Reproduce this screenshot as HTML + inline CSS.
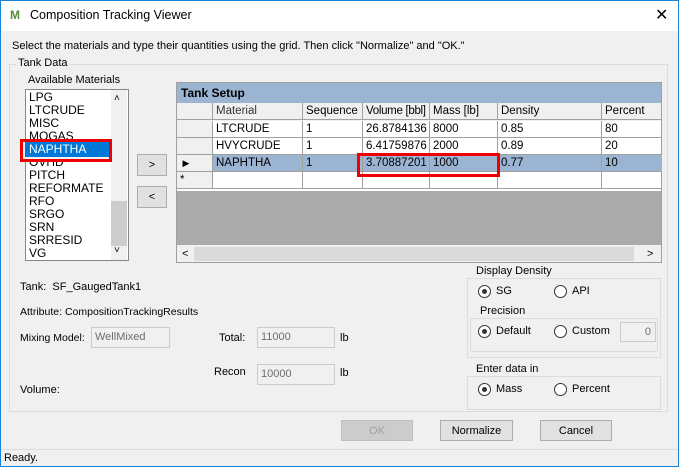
<!DOCTYPE html><html><head><style>
*{margin:0;padding:0;box-sizing:border-box}
body{width:679px;height:467px;overflow:hidden;font-family:"Liberation Sans",sans-serif;font-size:11px;color:#000;background:#f0f0f0;position:relative}
.a{position:absolute;white-space:nowrap}
.win{position:absolute;left:0;top:0;width:679px;height:467px;border:1px solid #1883d7}
.gb{position:absolute;border:1px solid #dcdcdc}
.gl{position:absolute;background:#f0f0f0;padding:0 2px;line-height:13px}
.btn{position:absolute;border:1px solid #adadad;background:#e1e1e1;text-align:center;line-height:20px}
.tb{position:absolute;border:1px solid #ccc;background:#f0f0f0;color:#6d6d6d;line-height:18px;padding-left:3px}
.rad{position:absolute;width:13px;height:13px;border:1px solid #333;border-radius:50%;background:#fff}
.rad.on::after{content:"";position:absolute;left:3px;top:3px;width:5px;height:5px;border-radius:50%;background:#333}
.li{position:absolute;left:31px;line-height:13px;font-size:12px}
.c{position:absolute;line-height:17px;padding-left:3px;border-right:1px solid #a0a0a0;border-bottom:1px solid #a0a0a0;height:17px;overflow:hidden;font-size:11.5px}
</style></head><body>
<div class="a" style="left:0;top:0;width:679px;height:31px;background:#fff"></div>
<div class="a" style="left:10px;top:8px;font-size:12px;color:#5a8a3a;font-weight:bold">M</div>
<div class="a" style="left:30px;top:8px;font-size:12.5px">Composition Tracking Viewer</div>
<div class="a" style="left:655px;top:5px;font-size:16px">✕</div>
<div class="a" style="left:12px;top:40px">Select the materials and type their quantities using the grid. Then click "Normalize" and "OK."</div>
<div class="gb" style="left:9px;top:64px;width:659px;height:348px"></div>
<div class="gl" style="left:16px;top:57px">Tank Data</div>
<div class="a" style="left:28px;top:74px">Available Materials</div>
<div class="a" style="left:25px;top:89px;width:104px;height:172px;background:#fff;border:1px solid #828790;overflow:hidden">
<div class="a" style="left:85px;top:0;width:16px;height:170px;background:#f0f0f0"></div>
<div class="a" style="left:85px;top:111px;width:16px;height:45px;background:#cdcdcd"></div>
<div class="a" style="left:88px;top:3px;font-size:10px">˄</div>
<div class="a" style="left:88px;top:155px;font-size:10px">˅</div>
</div>
<div class="li a" style="left:29px;top:91px">LPG</div>
<div class="li a" style="left:29px;top:104px">LTCRUDE</div>
<div class="li a" style="left:29px;top:117px">MISC</div>
<div class="li a" style="left:29px;top:130px">MOGAS</div>
<div class="li a" style="left:29px;top:156px">OVHD</div>
<div class="li a" style="left:29px;top:169px">PITCH</div>
<div class="li a" style="left:29px;top:182px">REFORMATE</div>
<div class="li a" style="left:29px;top:195px">RFO</div>
<div class="li a" style="left:29px;top:208px">SRGO</div>
<div class="li a" style="left:29px;top:221px">SRN</div>
<div class="li a" style="left:29px;top:234px">SRRESID</div>
<div class="li a" style="left:29px;top:247px">VG</div>
<div class="a" style="left:20px;top:139px;width:92px;height:23px;border:3px solid #e00;background:#f0f0f0"></div>
<div class="a" style="left:25px;top:142px;width:84px;height:15px;background:#0078d7"></div>
<div class="li a" style="left:29px;top:143px;color:#fff">NAPHTHA</div>
<div class="btn" style="left:137px;top:154px;width:30px;height:22px">&gt;</div>
<div class="btn" style="left:137px;top:186px;width:30px;height:22px">&lt;</div>
<div class="a" style="left:176px;top:82px;width:486px;height:181px;border:1px solid #a0a0a0;background:#ababab;overflow:hidden">
<div class="a" style="left:0;top:0;width:486px;height:20px;background:#9bb4d2;font-weight:bold;font-size:12px;line-height:20px;padding-left:4px">Tank Setup</div>
<div class="a" style="left:0;top:20px;width:486px;height:18px;background:#f0f0f0"></div>
<div class="a" style="left:0;top:38px;width:486px;height:70px;background:#fff"></div>
<div class="a" style="left:0;top:162px;width:486px;height:18px;background:#f0f0f0"></div>
<div class="a" style="left:17px;top:164px;width:440px;height:14px;background:#dadada"></div>
<div class="a" style="left:5px;top:162px;line-height:18px">&lt;</div>
<div class="a" style="left:470px;top:162px;line-height:18px">&gt;</div>
</div>
<div style="position:absolute;left:177px;top:103px">
<div class="c" style="left:0;top:0;width:36px;background:#f0f0f0"></div>
<div class="c" style="left:36px;top:0;width:90px;color:#333">Material</div>
<div class="c" style="left:126px;top:0;width:60px">Sequence</div>
<div class="c" style="left:186px;top:0;width:67px;letter-spacing:-0.3px">Volume [bbl]</div>
<div class="c" style="left:253px;top:0;width:68px">Mass [lb]</div>
<div class="c" style="left:321px;top:0;width:104px">Density</div>
<div class="c" style="left:425px;top:0;width:60px;border-right:0">Percent</div>
<div class="c" style="left:0;top:18px;width:36px;background:#f0f0f0"></div>
<div class="c" style="left:36px;top:18px;width:90px">LTCRUDE</div><div class="c" style="left:126px;top:18px;width:60px">1</div><div class="c" style="left:186px;top:18px;width:67px">26.8784136</div><div class="c" style="left:253px;top:18px;width:68px">8000</div><div class="c" style="left:321px;top:18px;width:104px">0.85</div><div class="c" style="left:425px;top:18px;width:60px;border-right:0">80</div>
<div class="c" style="left:0;top:35px;width:36px;background:#f0f0f0"></div>
<div class="c" style="left:36px;top:35px;width:90px">HVYCRUDE</div><div class="c" style="left:126px;top:35px;width:60px">1</div><div class="c" style="left:186px;top:35px;width:67px">6.41759876</div><div class="c" style="left:253px;top:35px;width:68px">2000</div><div class="c" style="left:321px;top:35px;width:104px">0.89</div><div class="c" style="left:425px;top:35px;width:60px;border-right:0">20</div>
<div class="c" style="left:0;top:52px;width:36px;background:#f0f0f0;font-size:9px">&nbsp;▶</div>
<div class="c" style="left:36px;top:52px;width:90px;background:#9bb4d2">NAPHTHA</div><div class="c" style="left:126px;top:52px;width:60px;background:#9bb4d2">1</div><div class="c" style="left:186px;top:52px;width:67px;background:#9bb4d2">3.70887201</div><div class="c" style="left:253px;top:52px;width:68px;background:#9bb4d2">1000</div><div class="c" style="left:321px;top:52px;width:104px;background:#9bb4d2">0.77</div><div class="c" style="left:425px;top:52px;width:60px;border-right:0;background:#9bb4d2">10</div>
<div class="c" style="left:0;top:69px;width:36px;background:#f0f0f0">*</div>
<div class="c" style="left:36px;top:69px;width:90px"></div><div class="c" style="left:126px;top:69px;width:60px"></div><div class="c" style="left:186px;top:69px;width:67px"></div><div class="c" style="left:253px;top:69px;width:68px"></div><div class="c" style="left:321px;top:69px;width:104px"></div><div class="c" style="left:425px;top:69px;width:60px;border-right:0"></div>
</div>
<div class="a" style="left:357px;top:153px;width:143px;height:24px;border:3px solid #e00"></div>
<div class="a" style="left:20px;top:281px">Tank:&nbsp;&nbsp;SF_GaugedTank1</div>
<div class="a" style="left:20px;top:306px;font-size:10.5px">Attribute:&nbsp;CompositionTrackingResults</div>
<div class="a" style="left:20px;top:332px;font-size:10.5px">Mixing Model:</div>
<div class="tb" style="left:91px;top:327px;width:79px;height:21px">WellMixed</div>
<div class="a" style="left:219px;top:332px">Total:</div>
<div class="tb" style="left:257px;top:327px;width:78px;height:21px">11000</div>
<div class="a" style="left:340px;top:332px">lb</div>
<div class="a" style="left:214px;top:366px">Recon</div>
<div class="tb" style="left:257px;top:364px;width:78px;height:21px">10000</div>
<div class="a" style="left:340px;top:367px">lb</div>
<div class="a" style="left:20px;top:384px">Volume:</div>
<div class="gb" style="left:467px;top:278px;width:194px;height:80px"></div>
<div class="gl" style="left:474px;top:265px">Display Density</div>
<div class="rad on" style="left:478px;top:285px"></div><div class="a" style="left:496px;top:285px">SG</div>
<div class="rad" style="left:554px;top:285px"></div><div class="a" style="left:572px;top:285px">API</div>
<div class="gb" style="left:470px;top:318px;width:188px;height:34px"></div>
<div class="gl" style="left:478px;top:305px">Precision</div>
<div class="rad on" style="left:478px;top:325px"></div><div class="a" style="left:496px;top:325px">Default</div>
<div class="rad" style="left:554px;top:325px"></div><div class="a" style="left:572px;top:325px">Custom</div>
<div class="tb" style="left:620px;top:322px;width:36px;height:20px;text-align:right;padding-right:4px">0</div>
<div class="gb" style="left:467px;top:376px;width:194px;height:34px"></div>
<div class="gl" style="left:474px;top:363px">Enter data in</div>
<div class="rad on" style="left:478px;top:383px"></div><div class="a" style="left:496px;top:383px">Mass</div>
<div class="rad" style="left:554px;top:383px"></div><div class="a" style="left:572px;top:383px">Percent</div>
<div class="btn" style="left:341px;top:420px;width:72px;height:21px;color:#a0a0a0;border-color:#bfbfbf;background:#ccc">OK</div>
<div class="btn" style="left:440px;top:420px;width:73px;height:21px">Normalize</div>
<div class="btn" style="left:540px;top:420px;width:72px;height:21px">Cancel</div>
<div class="a" style="left:1px;top:449px;width:677px;height:17px;border-top:1px solid #dcdcdc;padding-left:3px;line-height:16px">Ready.</div>
<div class="win"></div>
</body></html>
